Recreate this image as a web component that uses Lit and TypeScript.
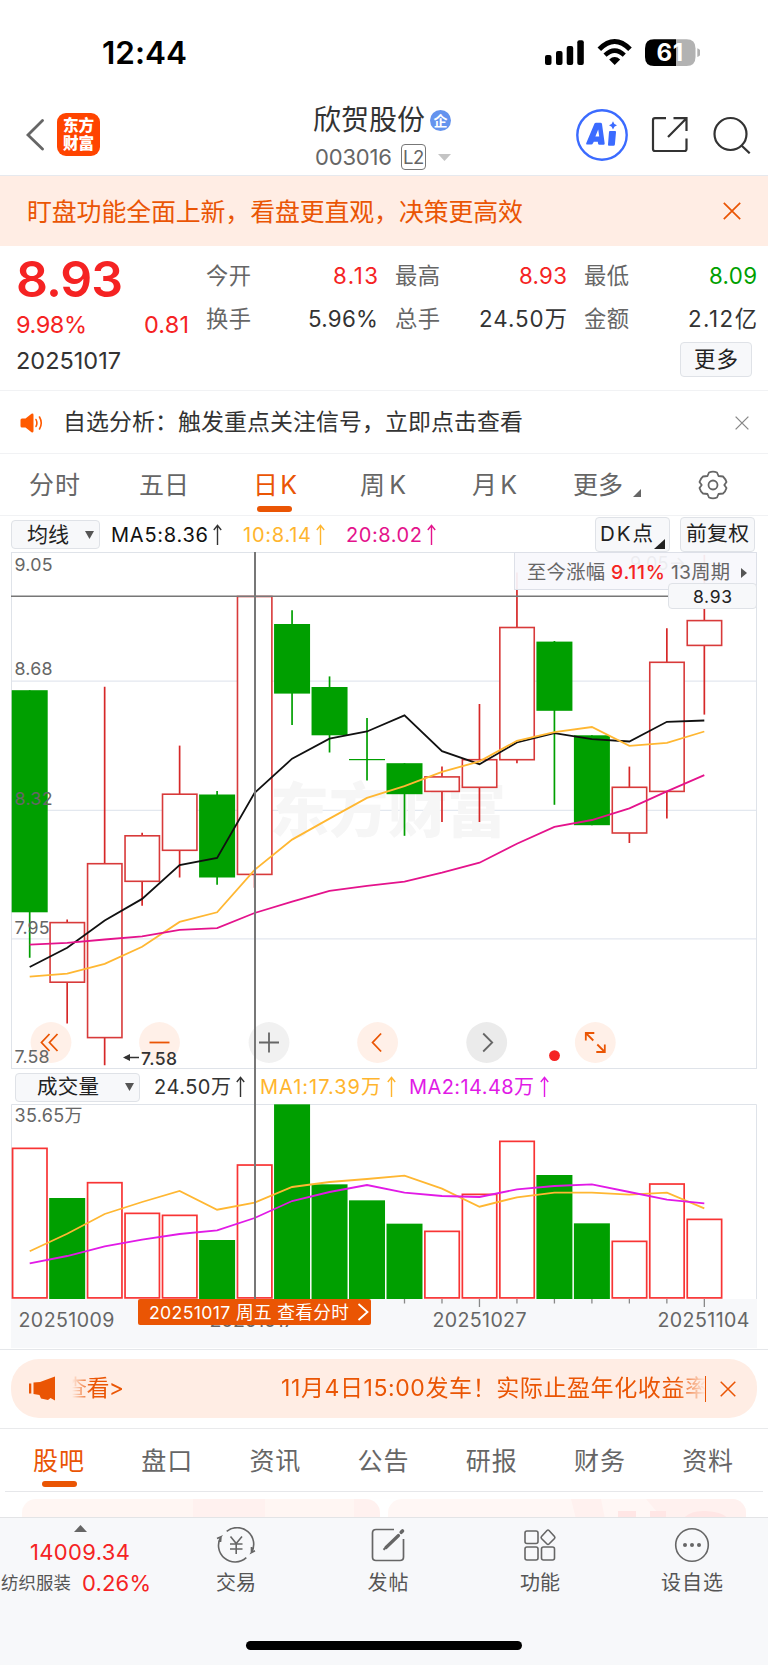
import { LitElement, html, css, svg } from "lit";
import { customElement, property } from "lit/decorators.js";

/** Text whose tracking is adjusted so that it fills the given width. */
@customElement("fit-text")
class FitText extends LitElement {
  @property() text = "";
  @property({ type: Number }) w = 0;

  static styles = css`
    :host { display: inline-block; white-space: nowrap; line-height: 1.2; flex: none; }
    .t { display: inline-block; }
  `;

  render() {
    return html`<span class="t">${this.text}</span>`;
  }

  updated() {
    const span = this.renderRoot.querySelector(".t") as HTMLElement;
    span.style.letterSpacing = "0px";
    const natural = span.getBoundingClientRect().width;
    const gap = (this.w - natural) / Math.max(1, [...this.text].length - 1);
    span.style.letterSpacing = gap + "px";
    span.style.marginRight = -gap + "px";
  }
}

const f = (text: string, w: number, cls = "") =>
  html`<fit-text class=${cls} .text=${text} .w=${w}></fit-text>`;

const X0 = 29.7;
const STEP = 37.48;
const cx = (i: number) => X0 + STEP * i;

type Candle = { up: boolean; top: number; bottom: number; high: number; low: number };
const c = (up: boolean, top: number, bottom: number, high: number, low: number): Candle => ({ up, top, bottom, high, low });

const CANDLES: Candle[] = [
  c(false, 690.2, 912.3, 690.2, 957.7),
  c(true, 922.6, 982.2, 919.5, 1023.5),
  c(true, 863.7, 1037.6, 686.7, 1065.2),
  c(true, 835.8, 881.3, 832.7, 905.7),
  c(true, 794.2, 850.3, 745.6, 877.5),
  c(false, 794.5, 877.5, 791, 884.7),
  c(true, 596.5, 874.4, 596.5, 887.8),
  c(false, 624, 693.6, 610.2, 725),
  c(false, 687, 735.3, 676.4, 752.5),
  c(false, 759, 760.2, 718, 780.4),
  c(false, 763.2, 794.2, 763.2, 835.8),
  c(true, 776.9, 791.4, 766.6, 822),
  c(true, 759.7, 787.3, 704, 822),
  c(true, 627.5, 759.7, 572.4, 763.2),
  c(false, 641.6, 710.8, 641, 804.8),
  c(false, 735.3, 825.2, 735.3, 825.2),
  c(true, 787.3, 833, 766.6, 843),
  c(true, 662.3, 791.4, 628.2, 818.6),
  c(true, 620.6, 645.4, 554.8, 714.6),
];
const toY = (v: number) => 540 + v / 2.9037;
const MA5 = [1240, 1184, 1105, 1042, 944, 923, 734, 635, 577, 556, 509, 613, 651, 588, 561, 578, 585, 528, 524].map(toY);
const MA10 = [1268, 1259, 1231, 1181, 1109, 1081, 958, 870, 809, 749, 715, 673, 643, 583, 558, 543, 598, 589, 556].map(toY);
const MA20 = [1175, 1170, 1160, 1151, 1132, 1127, 1083, 1050, 1019, 1004, 992, 966, 937, 882, 833, 813, 779, 730, 683].map(toY);

const volY = (v: number) => 1060 + v / 3;
const VOL = [263, 414, 366, 458, 464, 540, 313, 133, 373, 421, 491, 512, 401, 242, 345, 490, 542, 370, 476].map(volY);
const VMA1 = [574, 521, 462, 426, 393, 449, 428, 381, 366, 357, 347, 386, 440, 412, 398, 398, 404, 398, 445].map(volY);
const VMA2 = [610, 588, 559, 539, 522, 511, 474, 423, 396, 375, 398, 408, 411, 388, 378, 373, 396, 419, 430].map(volY);
/** Sessions whose volume bar is hollow. */
const VOL_UP = new Set([0, 2, 3, 4, 6, 11, 12, 13, 16, 17, 18]);

const pts = (ys: number[]) => ys.map((y, i) => `${cx(i).toFixed(1)},${y.toFixed(1)}`).join(" ");

const arrow = html`<svg class="arrow" width="9" height="22" viewBox="0 0 9 22"><path d="M4.5 21V1.6M.8 6L4.5 1.4 8.2 6" fill="none" stroke="currentColor" stroke-width="1.4"/></svg>`;
const caret = html`<svg class="caret" width="9" height="8" viewBox="0 0 9 8"><path d="M0 0H9L4.5 8Z" fill="#555"/></svg>`;
const cross = (s: number, color: string, sw = 1.7) =>
  html`<svg width=${s} height=${s} viewBox="0 0 18 18"><path d="M.8.8L17.2 17.2M17.2.8L.8 17.2" fill="none" stroke=${color} stroke-width=${sw}/></svg>`;

@customElement("app-root")
class AppRoot extends LitElement {
  static styles = css`
    :host { display: block; width: 768px; height: 1665px; background: #fff; color: #333; overflow: hidden;
      font-family: Inter, "Noto Sans CJK SC", sans-serif; font-size: 24px; }
    * { box-sizing: border-box; }
    svg { display: block; flex: none; }
    .row { display: flex; align-items: center; }

    .status { height: 86px; padding: 19px 68px 0 102px; justify-content: space-between; color: #000; }
    .clock { font-size: 31.5px; font-weight: 600; }

    .head { height: 90px; display: grid; grid-template-columns: 26px 31px 256px 247px 16px 75px 62px 55px; align-items: center; border-bottom: 1.5px solid #e6e9ee; }
    .head > * { grid-row: 1; }
    .back { grid-column: 2; margin-top: 8px; }
    .logo { grid-column: 3; width: 43px; height: 43px; border-radius: 9px; background: #ff4400; color: #fff; margin-top: 8px;
      display: flex; flex-direction: column; align-items: center; justify-content: center; font-size: 15.6px; font-weight: 900; line-height: 17.5px; }
    .logo span { line-height: 17.5px; }
    .name { grid-column: 4; display: flex; flex-direction: column; padding-top: 15px; }
    .name .top { gap: 5px; height: 38px; font-size: 28px; }
    .name .bot { height: 35px; padding-left: 2px; font-size: 22px; color: #666; }
    .badge { width: 21px; height: 21px; border-radius: 50%; background: #6493ee; color: #fff; font-size: 14px; font-weight: 700; display: flex; align-items: center; justify-content: center; line-height: 1; }
    .l2 { width: 25px; height: 26px; border: 1.3px solid #777; border-radius: 4px; font-size: 18.5px; display: flex; align-items: center; justify-content: center; margin: 0 12px 0 9px; letter-spacing: -.5px; }
    .ai { grid-column: 6; margin-top: 8px; }
    .share { grid-column: 7; margin-top: 8px; }
    .search { grid-column: 8; margin-top: 8px; }

    .banner { height: 70px; background: #ffede4; color: #ea5504; padding: 3px 27px 0 27px; justify-content: space-between; font-size: 24.9px; }
    .banner svg { margin-top: -4px; }

    .quote { height: 145px; display: grid; grid-template-columns: 190px 1fr; padding: 0 11px 0 16px; border-bottom: 1.5px solid #f1f2f4; }
    .left { display: flex; flex-direction: column; }
    .price { height: 62px; display: flex; align-items: center; font-size: 50px; font-weight: 600; color: #f52323; padding-top: 4px; }
    .delta { height: 34px; display: flex; align-items: center; justify-content: space-between; color: #f52323; width: 173px; font-size: 23.5px; }
    .date { height: 38px; display: flex; align-items: center; font-size: 23.5px; padding-top: 1px; }
    .grid { display: grid; grid-template-columns: 44px 128px 17px 44px 128px 17px 44px 1fr; grid-template-rows: 43px 43px 40px; align-items: center; font-size: 22.3px; padding-top: 9px; }
    .k { color: #666; }
    .v { justify-self: end; }
    .red { color: #f52323; }
    .green { color: #009f00; }
    .gap { width: 1px; }
    .btn { background: #f7f8fa; border: 1.5px solid #dfe2e7; border-radius: 4px; display: flex; align-items: center; flex: none; color: #222; }
    .more { grid-column: 1 / -1; justify-self: end; width: 72px; height: 35px; justify-content: center; font-size: 21.5px; margin-right: 5px; margin-top: -3px; }

    .analysis { height: 62.5px; padding: 2px 19px 0 20px; font-size: 22.9px; border-bottom: 1.5px solid #f1f2f4; }
    .analysis .msg { margin: 0 auto 0 20px; }

    .tabs { height: 63px; border-bottom: 1px solid #f1f2f4; color: #666; font-size: 25px; display: grid; align-items: center; }
    .period { grid-template-columns: 29px 110px 114px 107px 112px 101px 125px 1fr; height: 62.5px; padding-top: 1px; }
    .tab { position: relative; display: flex; align-items: center; height: 60px; }
    .on { color: #ea5504; }
    .on::after { content: ""; position: absolute; left: 4px; bottom: 3px; width: 35px; height: 6px; border-radius: 3px; background: #ea5504; }
    .tri { align-self: flex-end; margin: 0 0 18px 10px; }

    .ma { height: 36px; padding: 1px 0 0 11px; font-size: 20px; }
    .ma .sel { width: 89px; height: 29px; padding: 0 5px 0 15px; margin-right: 11px; font-size: 21px; justify-content: space-between; }
    .b5 { color: #111; } .b10 { color: #ffb52e; } .b20 { color: #e4138c; } .m2 { color: #e11ae6; }
    .arrow { margin-left: 5px; }
    .dk { width: 75px; height: 35px; padding-left: 4px; font-size: 20.5px; margin-left: 159px; }
    .dk svg { align-self: flex-end; margin: 0 0 2px 1px; }
    .fq { width: 75px; height: 35px; padding-left: 5px; font-size: 20.8px; margin-left: 10px; }
    .b10, .b20 { display: flex; align-items: center; }
    .s10 { margin-left: 21px; } .s20 { margin-left: 21px; }

    .chart { position: relative; height: 797px; }
    .crosshair { position: absolute; left: 254px; top: 0; width: 1.5px; height: 747px; background: #777; }
    .popup { position: absolute; left: 514px; top: 0; width: 243px; height: 38px; border: 1px solid #dde0e8; background: rgba(247,248,252,.93); font-size: 19.3px; color: #666; padding: 3px 0 0 12px; }
    .popup .pct { margin: 0 6px; font-weight: 500; }
    .popup svg { margin-left: 11px; }
    .tag { position: absolute; left: 668px; top: 31px; width: 89px; height: 26px; font-size: 17.5px; justify-content: center; padding-top: 1px; }
    .vol { height: 35px; padding: 1px 0 0 15px; font-size: 20px; }
    .vol .sel { width: 125px; height: 29px; padding: 0 5px 0 21px; font-size: 20.5px; justify-content: space-between; margin-right: 14px; }
    .v1 { margin-left: 15px; } .v2 { margin-left: 13px; }
    .v1 .arrow, .v2 .arrow { margin-left: 6px; }
    .daytag { position: absolute; left: 138px; top: 747px; width: 233px; height: 26px; background: #ea5504; border-radius: 2px; color: #fff; font-size: 17.7px; padding: 1px 0 0 11px; }
    .daytag svg { margin: -2px 0 0 8px; }
    text { font-family: Inter, "Noto Sans CJK SC", sans-serif; }

    .notice { height: 80px; border-top: 1.5px solid #e5e7ea; border-bottom: 1.5px solid #e9eaec; padding: 0 11px; }
    .pill { width: 746px; height: 59px; border-radius: 28px; background: #ffede4; color: #ea5504; font-size: 23px; padding-left: 17px; margin-top: -1px; }
    .tick { width: 634px; height: 26px; margin-left: 16px; border-right: 1.5px solid #ea5504; }
    .fade { -webkit-mask-image: linear-gradient(90deg, transparent 0, #000 20px, #000 604px, transparent 634px); height: 34px; width: 633px; overflow: hidden; flex: none; }
    .first { margin-left: -8px; }
    .second { margin-left: 157px; }
    .x { margin-left: 14px; }

    .info { height: 61.5px; grid-template-columns: 33px repeat(6, 108.2px) 1fr; border: 0; padding-top: 2px; }
    .info .on::after { left: 9px; bottom: 4px; }
    .line { height: 1.5px; margin: 0 5px; background: #e6e7ea; }
    .cards { height: 24.5px; padding: 7px 22px 0; gap: 8px; align-items: stretch; overflow: hidden; }
    .card { width: 358px; height: 40px; border-radius: 14px; flex: none; background: linear-gradient(90deg, #fff6f3 0 171px, #fff1ef 171px 243px, #fff6f3 243px 332px, #fff1ef 332px); overflow: hidden; }
    .card.b { background: #fff7f5; }

    .nav { height: 151px; background: #f7f8fa; border-top: 1.5px solid #e3e4e6; display: grid; grid-template-columns: 160px 152px 152px 152px 152px; grid-template-rows: 123.5px 26px; font-size: 20px; color: #555; }
    .item { display: flex; flex-direction: column; align-items: center; padding-top: 9.5px; }
    .item svg { margin-bottom: 8px; }
    .idx { display: flex; flex-direction: column; color: #f52323; font-size: 22px; }
    .idx .up { margin: 7px 0 7px 74px; }
    .idx .n { margin-left: 30px; height: 28px; }
    .idx .r2 { height: 30px; margin-top: 2px; padding-left: 1px; gap: 11px; }
    .idx .s { color: #555; font-size: 17.4px; }
    .home { grid-column: 1 / -1; width: 276px; height: 9px; border-radius: 5px; background: #000; margin-left: 246px; }
  `;

  label(x: number, y: number, w: number, t: string, size = 17.8, fill = "#666") {
    return svg`<text x=${x} y=${y + size * 0.3635} font-size=${size} textLength=${w} fill=${fill}>${t}</text>`;
  }

  candle(k: Candle, i: number) {
    const x = cx(i);
    const color = k.up ? "#d62828" : "#009f00";
    const body = k.up
      ? svg`<rect x=${x - 17.1} y=${k.top} width="34.4" height=${k.bottom - k.top} fill="#fff" stroke="#d83a3a" stroke-width="1.6"/>`
      : svg`<rect x=${x - 18} y=${k.top} width="36" height=${k.bottom - k.top} fill=${color}/>`;
    return svg`<path d="M${x} ${k.high}V${k.low}" stroke=${color} stroke-width="1.7"/>${body}`;
  }

  circle(x: number, fill: string, d: string, stroke: string) {
    return svg`<circle cx=${x} cy="1042.5" r="20.4" fill=${fill}/><path transform="translate(${x} 1042.5)" d=${d} fill="none" stroke=${stroke} stroke-width="1.8"/>`;
  }

  priceChart() {
    const peach = "rgba(255,237,228,.85)";
    return html`<svg width="768" height="517" viewBox="0 552 768 517">
      <path d="M11.5 681.2H756.5M11.5 810.3H756.5M11.5 938.8H756.5" stroke="#e3e8ef" stroke-width="1.3"/>
      <rect x="11.5" y="552.5" width="745" height="516" fill="none" stroke="#dfe3e9"/>
      <text x="270" y="832" font-size="59" font-weight="900" textLength="236" fill="#f6f6f6">东方财富</text>
      ${CANDLES.map((k, i) => this.candle(k, i))}
      <path d="M11 596.2H757" stroke="#777" stroke-width="1.5"/>
      ${this.label(630, 563, 56, "9.05→", 18, "#555")}
      <polyline points=${pts(MA5)} fill="none" stroke="#111" stroke-width="1.8"/>
      <polyline points=${pts(MA10)} fill="none" stroke="#ffb732" stroke-width="1.8"/>
      <polyline points=${pts(MA20)} fill="none" stroke="#e4138c" stroke-width="1.8"/>
      ${this.circle(51, peach, "M-1.5 -8.5L-9.5 0L-1.5 8.5M6.5 -8.5L-1.5 0L6.5 8.5", "#ea5504")}
      ${this.circle(159.5, peach, "M-10 0H10", "#ea5504")}
      ${this.circle(269, "rgba(238,238,238,.8)", "M-10 0H10M0 -10V10", "#666")}
      ${this.circle(377.6, peach, "M3.5 -9L-5 0L3.5 9", "#ea5504")}
      ${this.circle(486.7, "#ebebeb", "M-3.5 -9L5.5 0L-3.5 9", "#666")}
      ${this.circle(595.3, "#fff0e8", "M-9.5 -2V-9.5H-1M-9.5 -9.5L-2 -2M9.5 2V9.5H1M9.5 9.5L2 2", "#ea5504")}
      <circle cx="554.5" cy="1055.6" r="5.4" fill="#f52323"/>
      ${this.label(14.5, 564.8, 38, "9.05")}
      ${this.label(14.5, 669, 38, "8.68")}
      ${this.label(14.5, 798.2, 38, "8.32")}
      ${this.label(14.5, 927.2, 35, "7.95")}
      ${this.label(14.5, 1056.5, 35, "7.58")}
      <path d="M125 1057.5H139" stroke="#333" stroke-width="1.5"/><path d="M123 1057.5L130 1054V1061Z" fill="#333"/>
      <text x="141" y="1064.5" font-size="17.5" font-weight="500" textLength="36" fill="#333">7.58</text>
    </svg>`;
  }

  volumeChart() {
    return html`<svg width="768" height="245" viewBox="0 1104 768 245">
      <rect x="11" y="1299" width="746" height="49" fill="#f7f8fa"/>
      <path d="M11.5 1299V1104.5H756.5V1299" fill="none" stroke="#dfe3e9"/>
      ${VOL.map((top, i) =>
        VOL_UP.has(i)
          ? svg`<rect x=${cx(i) - 17.1} y=${top + 0.7} width="34.4" height=${1297.2 - top} fill="#fff" stroke="#f83434" stroke-width="1.7"/>`
          : svg`<rect x=${cx(i) - 18} y=${top} width="36" height=${1299 - top} fill="#009f00"/>`,
      )}
      <polyline points=${pts(VMA1)} fill="none" stroke="#ffb732" stroke-width="1.8"/>
      <polyline points=${pts(VMA2)} fill="none" stroke="#e11ae6" stroke-width="1.8"/>
      ${[10, 11, 12, 13, 14, 15, 16, 17, 18].map((i) => svg`<path d="M${cx(i)} 1299V${i === 12 || i === 18 ? 1307 : 1303.5}" stroke="#888" stroke-width="1.3"/>`)}
      ${this.label(14.5, 1115.8, 68, "35.65万", 18)}
      ${this.label(18.5, 1319.8, 96, "20251009", 19.6)}
      ${this.label(209.5, 1319.8, 85, "20251017", 19.6)}
      ${this.label(432.5, 1319.8, 94, "20251027", 19.6)}
      ${this.label(657.5, 1319.8, 92, "20251104", 19.6)}
    </svg>`;
  }

  render() {
    return html`
      <div class="row status">
        ${f("12:44", 85, "clock")}
        <svg width="156" height="28" viewBox="544 38 156 28">
          <rect x="545" y="54" width="6.5" height="10" rx="2"/><rect x="556" y="50" width="6.5" height="14" rx="2"/><rect x="566.7" y="45" width="6.5" height="19" rx="2"/><rect x="577.3" y="39.3" width="6.5" height="24.7" rx="2"/>
          <path d="M599.3 48.3Q614.7 32.8 630 48.3" fill="none" stroke="#000" stroke-width="5"/>
          <path d="M605 54.2Q614.7 45 624.3 54.2" fill="none" stroke="#000" stroke-width="4.4"/>
          <path d="M614.7 64L609.2 58.4Q614.7 53.8 620.2 58.4Z"/>
          <path d="M676 38.3H686.5Q695.5 38.3 695.5 47.3V56Q695.5 65 686.5 65H676Z" fill="#b2b2b2"/>
          <path d="M676 38.3H654Q645 38.3 645 47.3V56Q645 65 654 65H676Z"/>
          <path d="M697.3 47.3Q700.8 48.5 700.8 51.7T697.3 56Z" fill="#b2b2b2"/>
          <text x="656.5" y="60.3" font-size="24" font-weight="700" textLength="26.5" fill="#fff">61</text>
        </svg>
      </div>
      <div class="head">
        <svg class="back" width="19" height="32" viewBox="0 0 19 32"><path d="M16.5 1.5L2 16L16.5 30" fill="none" stroke="#666" stroke-width="2.8" stroke-linecap="round"/></svg>
        <div class="logo"><span>东方</span><span>财富</span></div>
        <div class="name">
          <div class="row top">${f("欣贺股份", 112)}<span class="badge">企</span></div>
          <div class="row bot">${f("003016", 77)}<span class="l2">L2</span><svg width="13" height="7" viewBox="0 0 13 7"><path d="M0 0H13L6.5 7Z" fill="#c4c4c4"/></svg></div>
        </div>
        <svg class="ai" width="52" height="52" viewBox="0 0 52 52"><circle cx="26" cy="26" r="24.7" fill="none" stroke="#3b6bff" stroke-width="2.4"/>
          <path fill-rule="evenodd" d="M18.5 14.5Q19 13.8 20 13.8H24.5Q25.7 13.8 26 15L28.7 34.5Q28.7 35.8 27.5 35.8H23.4Q22.3 35.8 22.1 34.7L21.8 32.7H17.8L17 34.3Q16.4 35.5 15.3 35.5H11Q9.7 35.5 10.2 34.2ZM22.2 20.5L19.4 27.6H23.2Z" fill="#3b6bff"/>
          <path d="M34 22H39Q40.2 22 40 23.3L38.9 35.5Q38.7 36.8 37.5 36.8H33Q31.8 36.8 32 35.5L33 23Q33.1 22 34 22ZM37 12.2L38.4 14.9L41 16.3L38.4 17.8L37 20.5L35.6 17.8L33 16.3L35.6 14.9Z" fill="#3b6bff"/></svg>
        <svg class="share" width="38" height="38" viewBox="0 0 38 38" fill="none" stroke="#333" stroke-width="2.2"><path d="M15 2.2H4Q2 2.2 2 4.2V33Q2 35 4 35H33.5Q35.5 35 35.5 33V22.5M22.5 2.2H35.5V15M35.5 2.2L17 21"/></svg>
        <svg class="search" width="39" height="38" viewBox="0 0 39 38" fill="none" stroke="#333" stroke-width="2.2"><circle cx="17.5" cy="18" r="16"/><path d="M28.5 29.5L36.7 37.3"/></svg>
      </div>
      <div class="row banner">${f("盯盘功能全面上新，看盘更直观，决策更高效", 496)}${cross(18, "#ea5504")}</div>

      <div class="quote">
        <div class="left">
          <div class="price">${f("8.93", 107)}</div>
          <div class="delta">${f("9.98%", 71)}${f("0.81", 45)}</div>
          <div class="date">${f("20251017", 105)}</div>
        </div>
        <div class="grid">
          ${f("今开", 45, "k")}${f("8.13", 45, "v red")}<i class="gap"></i>
          ${f("最高", 45, "k")}${f("8.93", 48, "v red")}<i class="gap"></i>
          ${f("最低", 45, "k")}${f("8.09", 48, "v green")}
          ${f("换手", 45, "k")}${f("5.96%", 70, "v")}<i class="gap"></i>
          ${f("总手", 45, "k")}${f("24.50万", 88, "v")}<i class="gap"></i>
          ${f("金额", 45, "k")}${f("2.12亿", 69, "v")}
          <div class="btn more">${f("更多", 44)}</div>
        </div>
      </div>

      <div class="row analysis">
        <svg width="23" height="20" viewBox="0 0 23 20"><path d="M.5 7Q.5 5.500 2 5.5H5.5L11.5.8Q13.5 0 13.5 2V18Q13.5 20 11.5 19.2L5.5 14.5H2Q.5 14.5 .5 13Z" fill="#ff5a00"/><path d="M16 6.5Q17.8 10 16 13.5M19.5 4Q23 10 19.5 16" fill="none" stroke="#ff5a00" stroke-width="1.6" stroke-linecap="round"/></svg>
        ${f("自选分析：触发重点关注信号，立即点击查看", 460, "msg")}
        ${cross(14, "#888")}
      </div>

      <div class="tabs period">
        <i></i><div class="tab">${f("分时", 51)}</div><div class="tab">${f("五日", 50)}</div><div class="tab on">${f("日K", 44)}</div><div class="tab">${f("周K", 46)}</div><div class="tab">${f("月K", 45)}</div>
        <div class="tab">${f("更多", 50)}<svg class="tri" width="8" height="8" viewBox="0 0 8 8"><path d="M8 0V8H0Z" fill="#666"/></svg></div>
        <svg width="30" height="30" viewBox="0 0 30 30" fill="none" stroke="#666" stroke-width="1.8"><path d="M11 2.5Q15 .8 19 2.5L20.5 6L25 6.5Q27.5 9 28.5 12L26.3 15L28.5 18Q27.5 21.5 25 23.5L20.5 24L19 27.5Q15 29.2 11 27.5L9.5 24L5 23.5Q2.5 21.5 1.5 18L3.7 15L1.5 12Q2.5 8.5 5 6.5L9.5 6Z" stroke-linejoin="round"/><circle cx="15" cy="15" r="4.5"/></svg>
      </div>

      <div class="row ma">
        <div class="btn sel">${f("均线", 42)}${caret}</div>
        ${f("MA5:8.36", 97, "b5")}${arrow}
        <span class="b10 s10">${f("10:8.14", 68)}${arrow}</span>
        <span class="b20 s20">${f("20:8.02", 76)}${arrow}</span>
        <div class="btn dk">${f("DK点", 53)}<svg width="11" height="10" viewBox="0 0 11 10"><path d="M11 0V10H0Z" fill="#222"/></svg></div>
        <div class="btn fq">${f("前复权", 63)}</div>
      </div>

      <div class="chart">
        ${this.priceChart()}
        <div class="row vol">
          <div class="btn sel">${f("成交量", 62)}${caret}</div>
          ${f("24.50万", 77)}${arrow}
          <span class="b10 v1">${f("MA1:17.39万", 121)}${arrow}</span>
          <span class="b20 m2 v2">${f("MA2:14.48万", 125)}${arrow}</span>
        </div>
        ${this.volumeChart()}
        <div class="crosshair"></div>
        <div class="row popup">${f("至今涨幅", 78)}${f("9.11%", 54, "pct red")}${f("13周期", 59)}<svg width="6" height="10" viewBox="0 0 6 10"><path d="M0 0L6 5L0 10Z" fill="#555"/></svg></div>
        <div class="btn tag">${f("8.93", 39)}</div>
        <div class="row daytag">${f("20251017 周五 查看分时", 200)}<svg width="12" height="18" viewBox="0 0 12 18"><path d="M1.500 1L10.500 9L1.500 17" fill="none" stroke="#fff" stroke-width="1.8"/></svg></div>
      </div>

      <div class="row notice">
        <div class="row pill">
          <svg width="28" height="25" viewBox="0 0 28 25"><path d="M1 7.5H3.3V17.5H1ZM5.5 6.5L12 6L27 .5V24.5L22.500 22L20 24L13 22.5L11.5 19L5.5 18Z" fill="#ea5504"/></svg>
          <div class="row tick"><div class="row fade">${f("查看>", 60, "first")}${f("11月4日15:00发车！实际止盈年化收益率", 427, "second")}</div></div>
          <span class="x">${cross(16, "#ea5504")}</span>
        </div>
      </div>

      <div class="tabs info"><i></i>${["股吧", "盘口", "资讯", "公告", "研报", "财务", "资料"].map((t, i) => html`<div class="tab ${i ? "" : "on"}">${f(t, 51)}</div>`)}</div>
      <div class="line"></div>
      <div class="row cards"><div class="card"></div><div class="card b"><svg width="358" height="20" viewBox="0 0 358 20"><path d="M183 0H213L217 20H188ZM258 0H358V20H275Z" fill="#fff1ef"/><path d="M230 12H248V20H230ZM262 12H278V20H262ZM295 20Q302 11 318 12Q336 13 340 20Z" fill="#ffe6e5"/></svg></div></div>

      <div class="nav">
        <div class="idx">
          <svg class="up" width="13" height="7" viewBox="0 0 13 7"><path d="M0 7H13L6.5 0Z" fill="#666"/></svg>
          ${f("14009.34", 100, "n")}
          <div class="row r2">${f("纺织服装", 70, "s")}${f("0.26%", 69)}</div>
        </div>
        <div class="item"><svg width="40" height="36" viewBox="0 0 40 36" fill="none" stroke="#666" stroke-width="1.6"><path d="M10.7 4.3A16.6 16.6 0 0 1 35.500 25.500L39 23.700M35.500 25.500V20M30.300 30.700A16.6 16.6 0 0 1 5 9.700L1 11.500M5 9.700L4.500 15"/><path d="M14.5 9.5L20.2 16.500L26 9.5M20.2 16.500V27M14 17H26.500M14 22H26.500"/></svg>${f("交易", 40)}</div>
        <div class="item"><svg width="36" height="36" viewBox="0 0 36 36" fill="none" stroke="#666" stroke-width="1.7"><path d="M24 2.5H6Q2.5 2.5 2.5 6V30Q2.5 33.5 6 33.5H30Q33.5 33.5 33.5 30V12"/><path d="M16 20.5L28.5 8.5" stroke-width="3.2" stroke-linecap="round"/><path d="M13.5 22.8L16 20.5" stroke-width="2"/><path d="M31.2 5.3L32.500 4" stroke-width="3.6" stroke-linecap="round"/></svg>${f("发帖", 41)}</div>
        <div class="item"><svg width="34" height="36" viewBox="0 0 34 36" fill="none" stroke="#666" stroke-width="1.6"><rect x="2" y="4" width="13" height="12.5" rx="2"/><rect x="2" y="20" width="13" height="13" rx="2"/><rect x="18.5" y="20" width="13" height="13" rx="2"/><path d="M24 3.5Q25 2.5 26 3.5L31.5 9.5Q32.3 10.5 31.5 11.5L26 17Q25 18 24 17L18.5 11.5Q17.7 10.5 18.5 9.5Z"/></svg>${f("功能", 40)}</div>
        <div class="item"><svg width="36" height="36" viewBox="0 0 36 36"><circle cx="18" cy="18" r="16.3" fill="none" stroke="#666" stroke-width="1.6"/><g fill="#666"><circle cx="11" cy="18" r="2"/><circle cx="18" cy="18" r="2"/><circle cx="25" cy="18" r="2"/></g></svg>${f("设自选", 62)}</div>
        <div class="home"></div>
      </div>
    `;
  }
}
